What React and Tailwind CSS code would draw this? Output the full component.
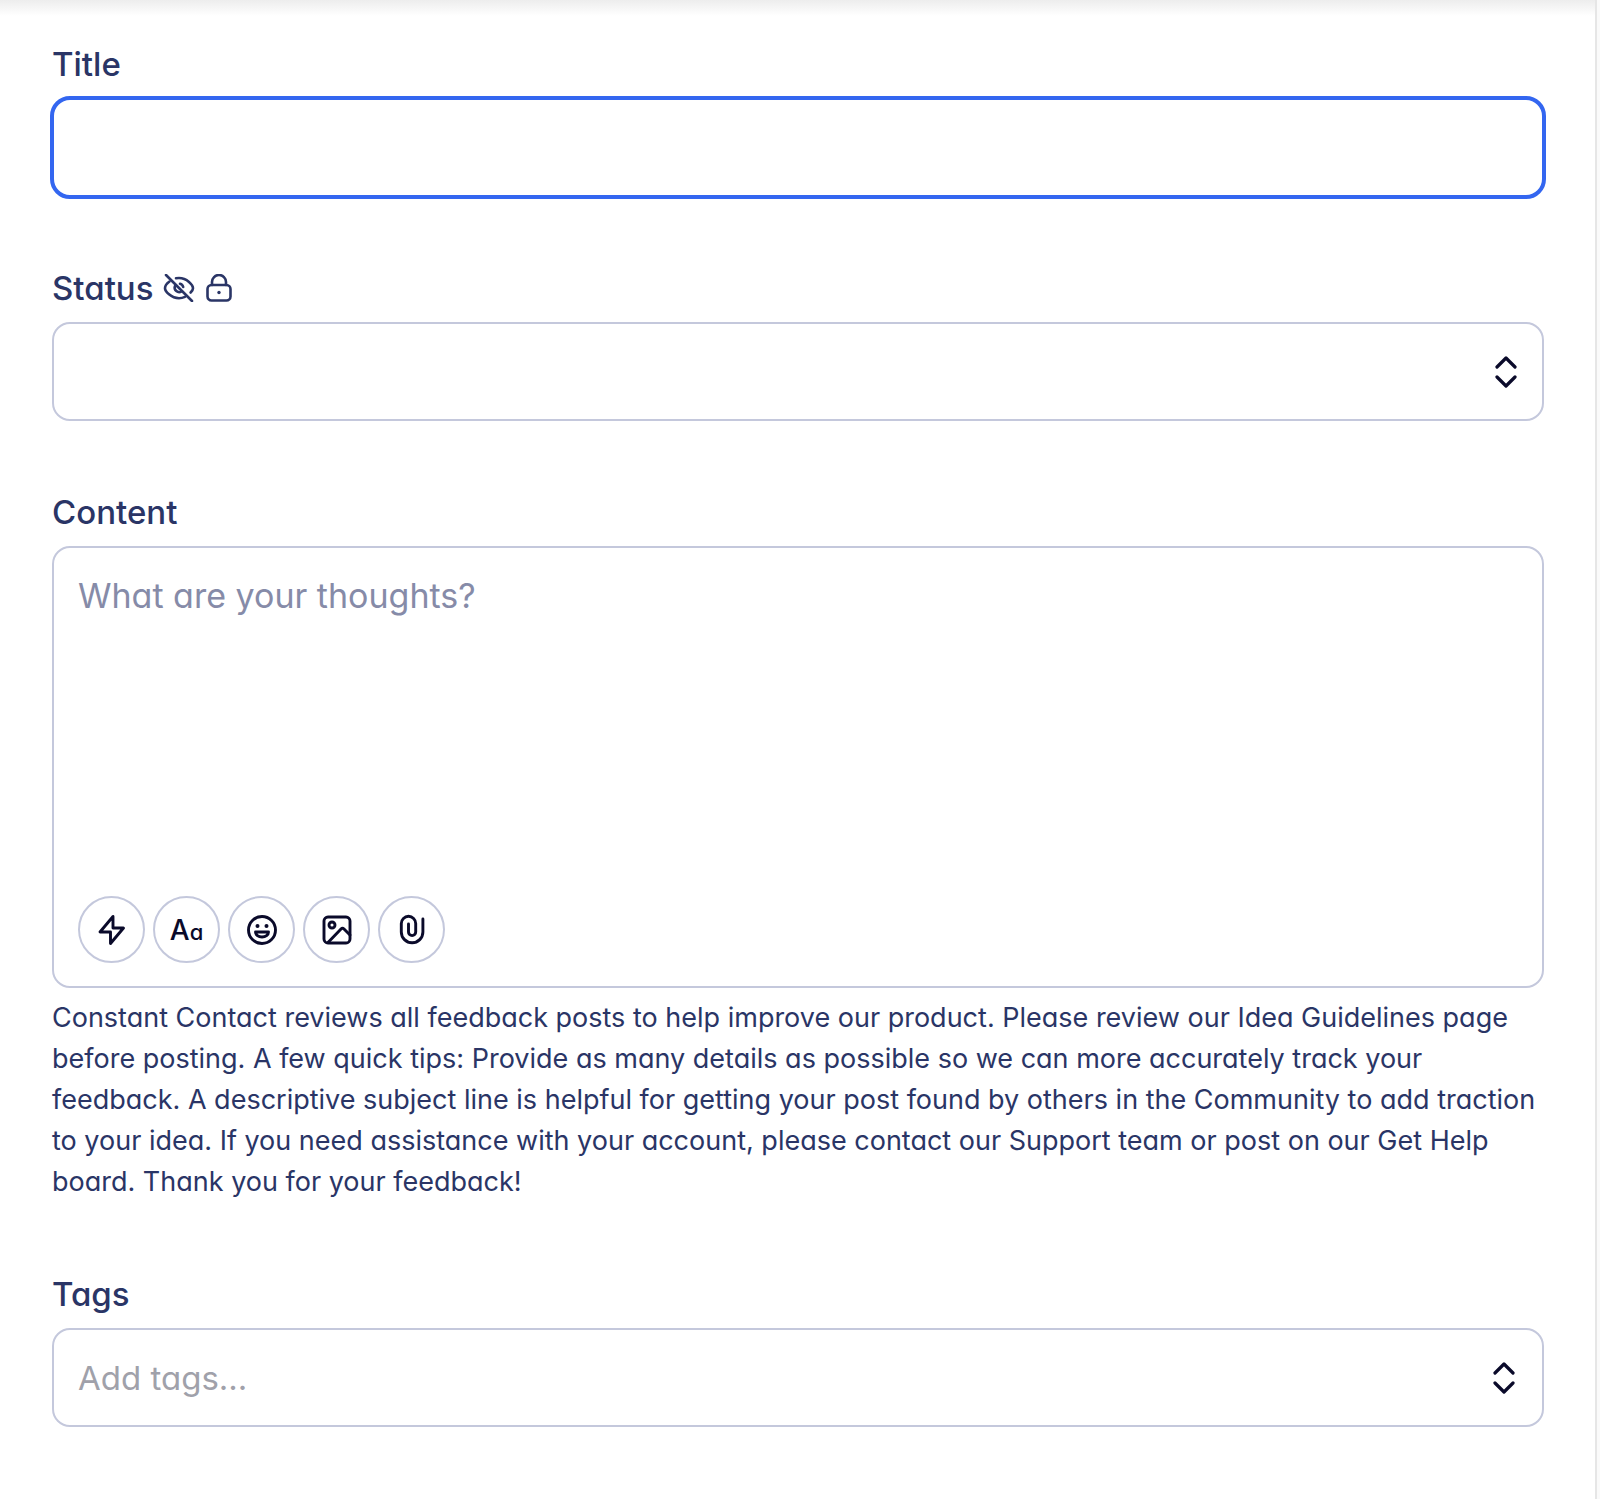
import React from 'react';

// Shared styles
const fieldBorder = 'rounded-[18px] border-2 border-[#c4c8dc]';
const toolButton =
  'flex size-[67px] items-center justify-center rounded-full border-2 border-[#c4c8dc] bg-white text-[#0a0a2a]';

const Label = ({ htmlFor, children }) => (
  <label htmlFor={htmlFor} className="text-[33px] leading-[48px] font-medium">
    {children}
  </label>
);

const Chevrons = () => (
  <svg
    className="h-8 w-6"
    viewBox="0 0 24 32"
    fill="none"
    stroke="currentColor"
    strokeWidth="3.2"
    strokeLinecap="round"
    strokeLinejoin="round"
    aria-hidden="true"
  >
    <path d="M3 11 12 2l9 9M3 21l9 9 9-9" />
  </svg>
);

const HiddenIcon = () => (
  <svg
    className="h-7 w-8"
    viewBox="0 0 32 28"
    fill="none"
    stroke="currentColor"
    strokeWidth="2.6"
    strokeLinecap="round"
    strokeLinejoin="round"
    aria-hidden="true"
  >
    <path d="M3 1l26 26" />
    <path d="M6.5 7.5C3.5 9.7 2 12.3 2 14.2c0 3 6 10 14 10 2.2 0 4.2-.5 6-1.3" />
    <path d="M13 4.3c1-.2 2-.3 3-.3 8 0 14 7 14 10.200 0 1.2-.9 2.800-2.400 4.300" />
    <path d="M12 12a4.500 4.500 0 0 0 6.500 5.500" />
    <path d="M17 9.800a4.300 4.300 0 0 1 3.200 3.200" />
  </svg>
);

const LockIcon = () => (
  <svg
    className="h-7 w-7"
    viewBox="0 0 28 28"
    fill="none"
    stroke="currentColor"
    strokeWidth="2.6"
    strokeLinecap="round"
    aria-hidden="true"
  >
    <rect x="2.5" y="11" width="23" height="15.5" rx="4" />
    <path d="M7 11V8a7 7 0 0 1 14 0v3" />
    <circle cx="14" cy="18.5" r="1.7" fill="currentColor" stroke="none" />
  </svg>
);

const ToolIcon = ({ children }) => (
  <svg
    className="size-8"
    viewBox="0 0 32 32"
    fill="none"
    stroke="currentColor"
    strokeWidth="2.9"
    strokeLinecap="round"
    strokeLinejoin="round"
    aria-hidden="true"
  >
    {children}
  </svg>
);

const HELP_TEXT =
  'Constant Contact reviews all feedback posts to help improve our product. Please review our Idea Guidelines page before posting. A few quick tips: Provide as many details as possible so we can more accurately track your feedback. A descriptive subject line is helpful for getting your post found by others in the Community to add traction to your idea. If you need assistance with your account, please contact our Support team or post on our Get Help board. Thank you for your feedback!';

export default function App() {
  return (
    <div className="min-h-screen bg-[#fafafa] pr-[3px] font-[Inter,sans-serif] text-[#2a3566] [font-feature-settings:'cv11']">
      <main className="min-h-screen border-r-2 border-[#e6e6e6] bg-white">
        <div className="h-4 bg-linear-to-b from-[#ededed] to-white" />

        <form className="flex flex-col gap-[67px] pt-6 pr-[51px] pb-[71px] pl-[52px]">
          {/* Title */}
          <div className="flex flex-col gap-2">
            <Label htmlFor="title">Title</Label>
            <input
              id="title"
              type="text"
              className="-mx-0.5 -mb-0.5 h-[103px] rounded-[20px] border-4 border-[#3366f0] px-6 text-[33px] outline-none"
            />
          </div>

          {/* Status */}
          <div className="flex flex-col gap-[10px]">
            <div className="flex items-center gap-[10px]">
              <Label htmlFor="status">Status</Label>
              <HiddenIcon />
              <LockIcon />
            </div>
            <div className="relative">
              <select
                id="status"
                className={`block h-[99px] w-full appearance-none bg-white px-6 text-[33px] ${fieldBorder}`}
              >
                <option value=""></option>
              </select>
              <span className="pointer-events-none absolute inset-y-0 right-[26px] flex items-center text-[#0a0a2a]">
                <Chevrons />
              </span>
            </div>
          </div>

          {/* Content */}
          <div className="flex flex-col">
            <Label htmlFor="content">Content</Label>
            <div className={`mt-[10px] flex flex-col px-6 pt-[23px] pb-[23px] ${fieldBorder}`}>
              <textarea
                id="content"
                placeholder="What are your thoughts?"
                className="h-[325px] resize-none text-[34px] leading-[50px] outline-none placeholder:text-[#868ba8]"
              />
              <div className="flex gap-2">
                <button type="button" aria-label="Quick actions" className={toolButton}>
                  <ToolIcon>
                    <path d="M17 2.5 4 18h10.500L14.500 29.500 27.500 14H17z" />
                  </ToolIcon>
                </button>
                <button type="button" aria-label="Text format" className={toolButton}>
                  <span className="pt-0.5 text-[28px] leading-8 font-medium">
                    A<span className="text-[22px]">a</span>
                  </span>
                </button>
                <button type="button" aria-label="Emoji" className={toolButton}>
                  <ToolIcon>
                    <circle cx="16" cy="16" r="13.5" />
                    <circle cx="11.5" cy="12" r="2" fill="currentColor" stroke="none" />
                    <circle cx="20.5" cy="12" r="2" fill="currentColor" stroke="none" />
                    <path d="M9.5 18h13a6.5 5 0 0 1-13 0z" />
                  </ToolIcon>
                </button>
                <button type="button" aria-label="Image" className={toolButton}>
                  <ToolIcon>
                    <rect x="3" y="3" width="26" height="26" rx="4" />
                    <circle cx="11" cy="11" r="3" />
                    <path d="M7 28.5 20 15q1.500-1.500 3 0l6 6" />
                  </ToolIcon>
                </button>
                <button type="button" aria-label="Attachment" className={toolButton}>
                  <ToolIcon>
                    <path d="M12.500 10v8a3.600 3.600 0 0 0 7.200 0V9.500a7.200 7.200 0 0 0-14.400 0V18a10.800 10.800 0 0 0 21.600 0V5" />
                  </ToolIcon>
                </button>
              </div>
            </div>
            <p className="mt-[9px] pb-px text-[27px] leading-[41px]">{HELP_TEXT}</p>
          </div>

          {/* Tags */}
          <div className="flex flex-col gap-[10px]">
            <Label htmlFor="tags">Tags</Label>
            <div className={`flex h-[99px] items-center pr-[26px] pl-6 ${fieldBorder}`}>
              <input
                id="tags"
                type="text"
                placeholder="Add tags…"
                className="min-w-0 flex-1 text-[33px] leading-[50px] outline-none placeholder:text-[#a0a1aa]"
              />
              <button type="button" aria-label="Show tags" className="text-[#0a0a2a]">
                <Chevrons />
              </button>
            </div>
          </div>
        </form>
      </main>
    </div>
  );
}
